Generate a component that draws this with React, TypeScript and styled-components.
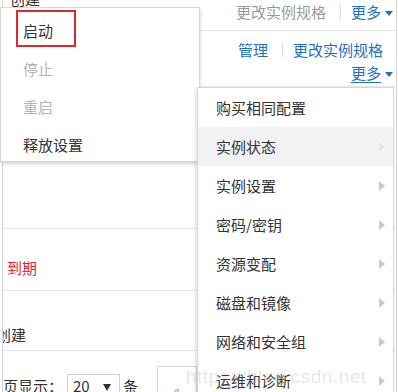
import styled, { createGlobalStyle } from "styled-components";

const GlobalStyle = createGlobalStyle`
  html, body {
    margin: 0;
    padding: 0;
    background: #fff;
  }
  body {
    font-family: "Noto Sans CJK SC", "Noto Sans", sans-serif;
  }
`;

const Frame = styled.div`
  position: relative;
  width: 398px;
  height: 392px;
  overflow: hidden;
  background: #fff;
  font-size: 15px;
  line-height: 20px;
  color: #333;
`;

const Table = styled.div`
  margin-left: 2px;
  width: 393px;
  height: 100%;
  border-left: 1px solid #d6d6d6;
  border-right: 1px solid #d6d6d6;
  display: flex;
  flex-direction: column;
  overflow: hidden;
`;

const Row = styled.div<{ $h: number }>`
  flex: none;
  height: ${(p) => p.$h}px;
  box-sizing: border-box;
  display: flex;
  justify-content: space-between;
  align-items: flex-start;
  border-bottom: 1px solid #e8e8e8;
`;

const Cell = styled.div<{ $top?: number; $left?: number; $color?: string }>`
  padding-top: ${(p) => p.$top ?? 0}px;
  margin-left: ${(p) => p.$left ?? 0}px;
  color: ${(p) => p.$color ?? "#333"};
  white-space: nowrap;
`;

const Actions = styled.div<{ $top: number }>`
  padding-top: ${(p) => p.$top}px;
  padding-right: 3px;
  display: flex;
  flex-direction: column;
  align-items: flex-end;
`;

const ActionLine = styled.div<{ $shift?: number; $gap?: number }>`
  display: flex;
  align-items: center;
  margin-right: ${(p) => p.$shift ?? 0}px;
  margin-top: ${(p) => p.$gap ?? 0}px;
  white-space: nowrap;
`;

const Link = styled.span<{ $muted?: boolean; $under?: boolean }>`
  color: ${(p) => (p.$muted ? "#9a9a9a" : "#1f6fc5")};
  text-decoration: ${(p) => (p.$under ? "underline" : "none")};
  text-underline-offset: 3px;
`;

const Sep = styled.span`
  width: 1px;
  height: 14px;
  margin: 0 10px 0 14px;
  background: #dcdcdc;
`;

const Caret = styled.span`
  width: 0;
  height: 0;
  margin-left: 4px;
  margin-top: 2px;
  border-left: 4px solid transparent;
  border-right: 4px solid transparent;
  border-top: 5px solid #1f6fc5;
`;

const Footer = styled.div`
  flex: 1;
  display: flex;
  align-items: flex-start;
  padding-top: 23px;
  white-space: nowrap;
`;

const FooterText = styled.span<{ $left?: number }>`
  margin-top: 2px;
  margin-left: ${(p) => p.$left ?? 0}px;
  color: #333;
`;

const Select = styled.div`
  margin-left: 4px;
  width: 53px;
  height: 30px;
  box-sizing: border-box;
  border: 1px solid #cfcfcf;
  display: flex;
  justify-content: space-between;
  padding: 1px 8px 0 5px;
  font-size: 15px;
`;

const SelectArrow = styled.span`
  width: 0;
  height: 0;
  margin-top: 8px;
  border-left: 4px solid transparent;
  border-right: 4px solid transparent;
  border-top: 7px solid #333;
`;

const Pager = styled.div`
  margin-left: 19px;
  margin-top: -8px;
  width: 40px;
  height: 40px;
  box-sizing: border-box;
  border: 1px solid #d6d6d6;
  display: flex;
  justify-content: center;
  padding-top: 13px;
  color: #999;
  font-size: 13px;
`;

const PopupLeft = styled.div`
  position: absolute;
  left: 0;
  top: 7px;
  width: 200px;
  height: 155px;
  box-sizing: border-box;
  padding-top: 4px;
  background: #fff;
  border: 1px solid #d8d8d8;
  box-shadow: 0 2px 4px rgba(0, 0, 0, 0.18);
`;

const MenuRight = styled.div`
  position: absolute;
  left: 197px;
  top: 87px;
  width: 197px;
  height: 330px;
  box-sizing: border-box;
  background: #fff;
  border: 1px solid #d8d8d8;
  box-shadow: -1px 2px 4px rgba(0, 0, 0, 0.15);
`;

const Item = styled.div<{ $h: number; $pad: number; $disabled?: boolean; $active?: boolean }>`
  height: ${(p) => p.$h}px;
  display: flex;
  align-items: center;
  justify-content: space-between;
  padding: 0 8px 0 ${(p) => p.$pad}px;
  background: ${(p) => (p.$active ? "#f2f2f2" : "transparent")};
  color: ${(p) => (p.$disabled ? "#b4b4b4" : "#333")};
`;

const SubArrow = styled.span<{ $faint?: boolean }>`
  width: 0;
  height: 0;
  border-top: 5px solid transparent;
  border-bottom: 5px solid transparent;
  border-left: 6px solid ${(p) => (p.$faint ? "#e6e6e6" : "#cacaca")};
`;

const Highlight = styled.div`
  position: absolute;
  left: 16px;
  top: 10px;
  width: 60px;
  height: 37px;
  box-sizing: border-box;
  border: 2px solid #e3262c;
  pointer-events: none;
`;

const Watermark = styled.div`
  position: absolute;
  left: 186px;
  top: 367px;
  font-family: "Liberation Sans", Arial, sans-serif;
  font-size: 19px;
  letter-spacing: 0.5px;
  color: rgba(170, 170, 170, 0.3);
  pointer-events: none;
  white-space: nowrap;
`;

const leftItems = [
  { label: "启动" },
  { label: "停止", disabled: true },
  { label: "重启", disabled: true },
  { label: "释放设置" },
];

const rightItems = [
  { label: "购买相同配置", sub: false },
  { label: "实例状态", sub: true, active: true },
  { label: "实例设置", sub: true },
  { label: "密码/密钥", sub: true },
  { label: "资源变配", sub: true },
  { label: "磁盘和镜像", sub: true },
  { label: "网络和安全组", sub: true },
  { label: "运维和诊断", sub: true },
];

export default function App() {
  return (
    <Frame>
      <GlobalStyle />
      <Table>
        <Row $h={31}>
          <Cell $top={0} $left={7} style={{ marginTop: -11 }}>
            创建
          </Cell>
          <Actions $top={2}>
            <ActionLine>
              <Link $muted>更改实例规格</Link>
              <Sep />
              <Link>更多</Link>
              <Caret />
            </ActionLine>
          </Actions>
        </Row>
        <Row $h={56}>
          <Cell />
          <Actions $top={9}>
            <ActionLine $shift={10}>
              <Link>管理</Link>
              <Sep />
              <Link>更改实例规格</Link>
            </ActionLine>
            <ActionLine $gap={3}>
              <Link $under>更多</Link>
              <Caret />
            </ActionLine>
          </Actions>
        </Row>
        <Row $h={142} />
        <Row $h={62}>
          <Cell $top={29} $left={4} $color="#e4262c">
            到期
          </Cell>
        </Row>
        <Row $h={60}>
          <Cell $top={34} $left={-7}>
            创建
          </Cell>
        </Row>
        <Footer>
          <FooterText $left={-15}>每页显示：</FooterText>
          <Select>
            <span>20</span>
            <SelectArrow />
          </Select>
          <FooterText $left={3}>条</FooterText>
          <Pager>«</Pager>
        </Footer>
      </Table>

      <PopupLeft>
        {leftItems.map((it) => (
          <Item key={it.label} $h={38} $pad={22} $disabled={it.disabled}>
            {it.label}
          </Item>
        ))}
      </PopupLeft>
      <Highlight />

      <MenuRight>
        {rightItems.map((it) => (
          <Item key={it.label} $h={39} $pad={18} $active={it.active}>
            <span>{it.label}</span>
            {it.sub && <SubArrow $faint={it.active} />}
          </Item>
        ))}
      </MenuRight>

      <Watermark>https://blog.csdn.net</Watermark>
    </Frame>
  );
}
